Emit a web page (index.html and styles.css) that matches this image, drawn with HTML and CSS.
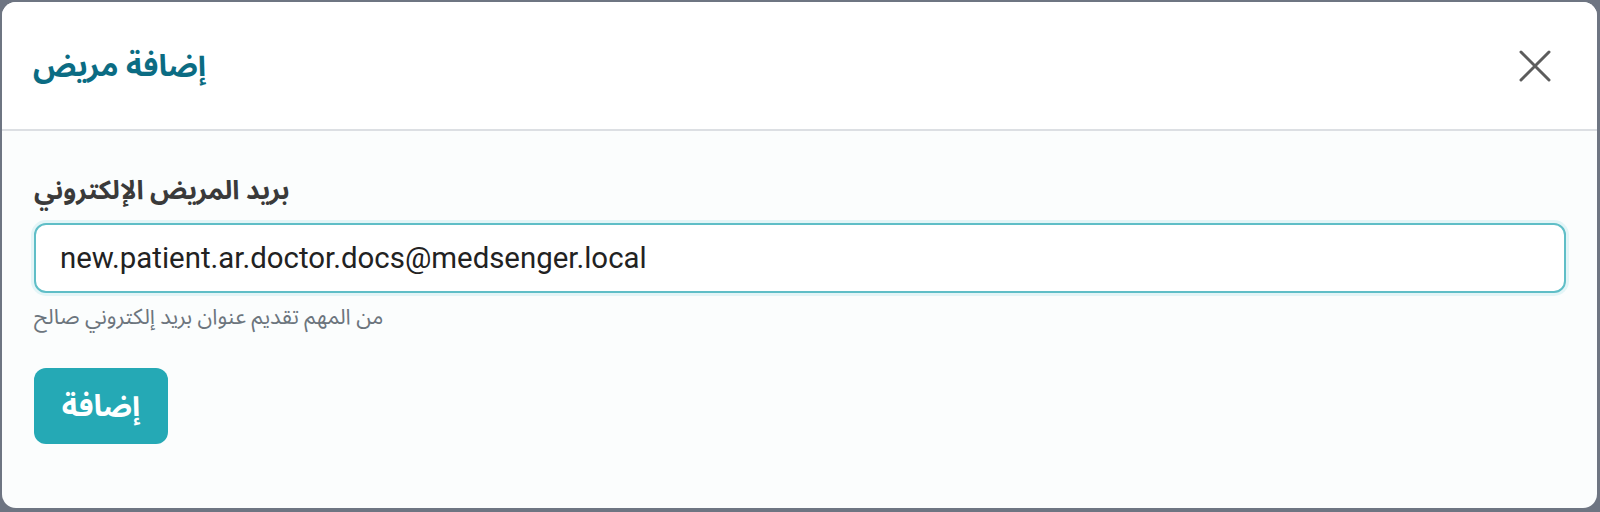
FILE: index.html
```html
<!DOCTYPE html>
<html lang="ar">
<head>
<meta charset="utf-8">
<link rel="stylesheet" href="styles.css">
</head>
<body>
<div class="backdrop">
  <div class="modal">
    <div class="modal-header">
      <h2 class="modal-title">إضافة مريض</h2>
      <button class="close-btn" aria-label="close">
        <svg width="32" height="32" viewBox="0 0 32 32"><path d="M2 2L30 30M30 2L2 30" stroke="#5c5c5c" stroke-width="3" stroke-linecap="round"/></svg>
      </button>
    </div>
    <div class="modal-body">
      <label class="field-label">بريد المريض الإلكتروني</label>
      <input class="field-input" type="text" value="new.patient.ar.doctor.docs@medsenger.local">
      <div class="field-help">من المهم تقديم عنوان بريد إلكتروني صالح</div>
      <button class="submit-btn">إضافة</button>
    </div>
  </div>
</div>
</body>
</html>
```

FILE: styles.css
```css
html, body {
  margin: 0;
  padding: 0;
  height: 100%;
}
body {
  font-family: Roboto, "Noto Sans Arabic", sans-serif;
}
.backdrop {
  height: 512px;
  box-sizing: border-box;
  padding: 2px 3px 4px 2px;
  background: #6e7582;
}
.modal {
  height: 100%;
  background: #fbfdfd;
  border-radius: 14px;
  overflow: hidden;
  display: flex;
  flex-direction: column;
}
.modal-header {
  height: 127px;
  flex: none;
  background: #ffffff;
  border-bottom: 2px solid #dcdfe3;
  display: flex;
  align-items: center;
  justify-content: space-between;
  padding: 0 46px 0 31px;
}
.modal-title {
  margin: 0;
  font-size: 30.5px;
  line-height: 44px;
  font-weight: 700;
  color: #0b6c83;
}
.close-btn {
  background: none;
  border: 0;
  padding: 0;
  width: 32px;
  height: 32px;
  display: flex;
}
.modal-body {
  padding: 41px 31px 0 32px;
  display: flex;
  flex-direction: column;
  align-items: flex-start;
}
.field-label {
  font-size: 26.2px;
  font-weight: 700;
  color: #3a3a3a;
  line-height: 36px;
}
.field-input {
  margin-top: 15px;
  width: 100%;
  box-sizing: border-box;
  height: 70px;
  border: 2px solid #5fbec7;
  border-radius: 12px;
  box-shadow: 0 0 0 3px #e3f5f7;
  padding: 0 24px;
  font-family: Roboto, sans-serif;
  font-size: 29.4px;
  color: #222;
  background: #fff;
  outline: none;
}
.field-help {
  margin-top: 10px;
  font-size: 21.7px;
  line-height: 28px;
  color: #6c757d;
}
.submit-btn {
  margin-top: 37px;
  width: 134px;
  height: 76px;
  border: 0;
  border-radius: 12px;
  background: #25a9b5;
  color: #fff;
  font-family: Roboto, "Noto Sans Arabic", sans-serif;
  font-size: 29.9px;
  font-weight: 700;
}
```
